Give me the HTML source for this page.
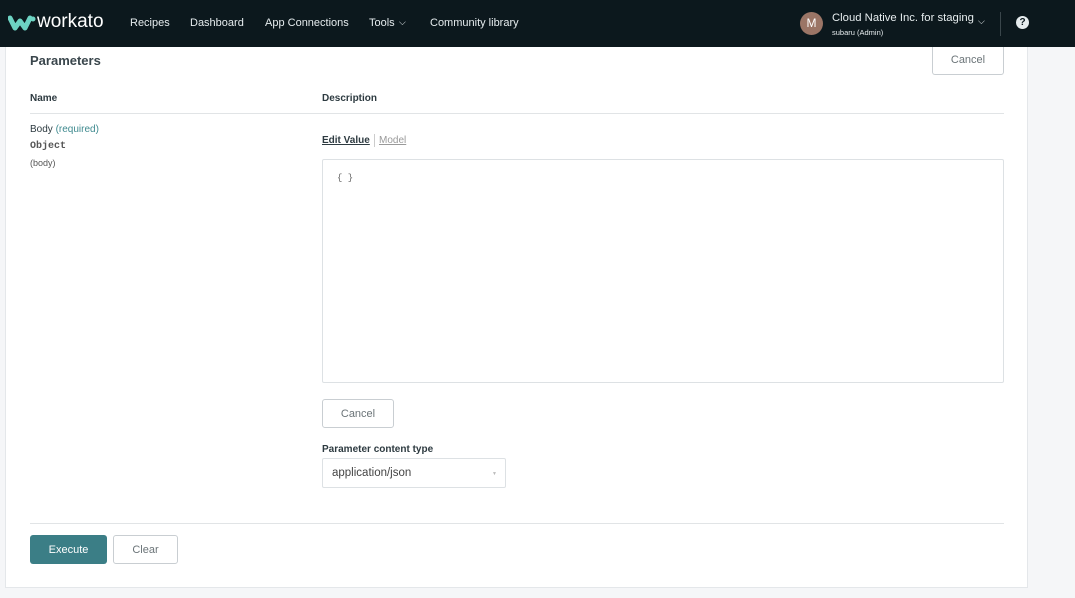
<!DOCTYPE html>
<html><head><meta charset="utf-8"><style>
*{box-sizing:border-box;margin:0;padding:0}
body{width:1075px;height:598px;overflow:hidden;background:#f5f6f8;font-family:"Liberation Sans",sans-serif;color:#2d3a40;position:relative}
.hdr{position:absolute;left:0;top:0;width:1075px;height:47px;background:#0c181d;color:#e6ecee;font-size:11px}
.hdr span{position:absolute;top:17px}
.card{position:absolute;left:5px;top:47px;width:1023px;height:541px;background:#fff;border:1px solid #e4e7ea;border-top:none}
.a{position:absolute}
.btn{position:absolute;border:1px solid #c9ced2;border-radius:3px;background:#fff;color:#6b7478;font-size:11px;text-align:center}
</style></head><body>
<div class="hdr">
<svg class="a" style="left:8px;top:14px" width="28" height="18" viewBox="0 0 28 18"><path d="M2 4 L7 14 L12 7 L17 14 L22 4" stroke="#6dd3c3" stroke-width="5" fill="none" stroke-linecap="round" stroke-linejoin="round"/><circle cx="25" cy="5" r="2.5" fill="#6dd3c3"/></svg>
<span style="left:37px;top:11px;font-size:19px;color:#fff">workato</span>
<span style="left:130px">Recipes</span>
<span style="left:190px">Dashboard</span>
<span style="left:265px">App Connections</span>
<span style="left:369px">Tools</span>
<span style="left:399px;top:17px;font-size:9px">⌵</span>
<span style="left:430px">Community library</span>
<div class="a" style="left:800px;top:12px;width:23px;height:23px;border-radius:50%;background:#9b7566;color:#fff;font-size:12px;text-align:center;line-height:23px">M</div>
<span style="left:832px;top:12px;font-size:11.3px">Cloud Native Inc. for staging</span>
<span style="left:832px;top:28px;font-size:7.5px">subaru (Admin)</span>
<span style="left:978px;top:16px;font-size:9px">⌵</span>
<div class="a" style="left:1000px;top:12px;width:1px;height:24px;background:#3a464b"></div>
<div class="a" style="left:1016px;top:16px;width:13px;height:13px;border-radius:50%;background:#e6ecee;color:#0c181d;font-size:10px;font-weight:bold;text-align:center;line-height:13px">?</div>
</div>
<div class="card"></div>
<div class="a" style="left:30px;top:53px;font-size:13px;font-weight:bold;color:#3a464c">Parameters</div>
<div class="btn" style="left:932px;top:47px;width:72px;height:28px;line-height:26px;border-top:none;border-radius:0 0 3px 3px">Cancel</div>
<div class="a" style="left:30px;top:93px;font-size:10px;font-weight:bold">Name</div>
<div class="a" style="left:322px;top:93px;font-size:10px;font-weight:bold">Description</div>
<div class="a" style="left:30px;top:113px;width:974px;height:1px;background:#e1e4e6"></div>
<div class="a" style="left:30px;top:124px;font-size:10px">Body <span style="color:#3f8a8f">(required)</span></div>
<div class="a" style="left:30px;top:141px;font-size:10px;font-weight:bold;font-family:'Liberation Mono',monospace;color:#555">Object</div>
<div class="a" style="left:30px;top:158px;font-size:9px;color:#555">(body)</div>
<div class="a" style="left:322px;top:135px;font-size:10px;font-weight:bold;text-decoration:underline">Edit Value</div>
<div class="a" style="left:374px;top:134px;width:1px;height:13px;background:#ccc"></div>
<div class="a" style="left:379px;top:135px;font-size:10px;color:#999;text-decoration:underline">Model</div>
<div class="a" style="left:322px;top:159px;width:682px;height:224px;border:1px solid #dde1e4;border-radius:2px"></div>
<div class="a" style="left:337px;top:173px;font-size:9px;font-family:'Liberation Mono',monospace;color:#666">{ }</div>
<div class="btn" style="left:322px;top:399px;width:72px;height:29px;line-height:28px">Cancel</div>
<div class="a" style="left:322px;top:444px;font-size:10px;font-weight:bold">Parameter content type</div>
<div class="a" style="left:322px;top:458px;width:184px;height:30px;border:1px solid #dde1e4;border-radius:2px;font-size:11.5px;color:#444;padding:8px 0 0 9px">application/json<span style="position:absolute;right:8px;top:12px;font-size:5px;color:#bbb">▼</span></div>
<div class="a" style="left:30px;top:523px;width:974px;height:1px;background:#e1e4e6"></div>
<div class="a" style="left:30px;top:535px;width:77px;height:29px;background:#3b7e86;border-radius:3px;color:#fff;font-size:11px;text-align:center;line-height:30px">Execute</div>
<div class="btn" style="left:113px;top:535px;width:65px;height:29px;line-height:28px">Clear</div>
</body></html>
